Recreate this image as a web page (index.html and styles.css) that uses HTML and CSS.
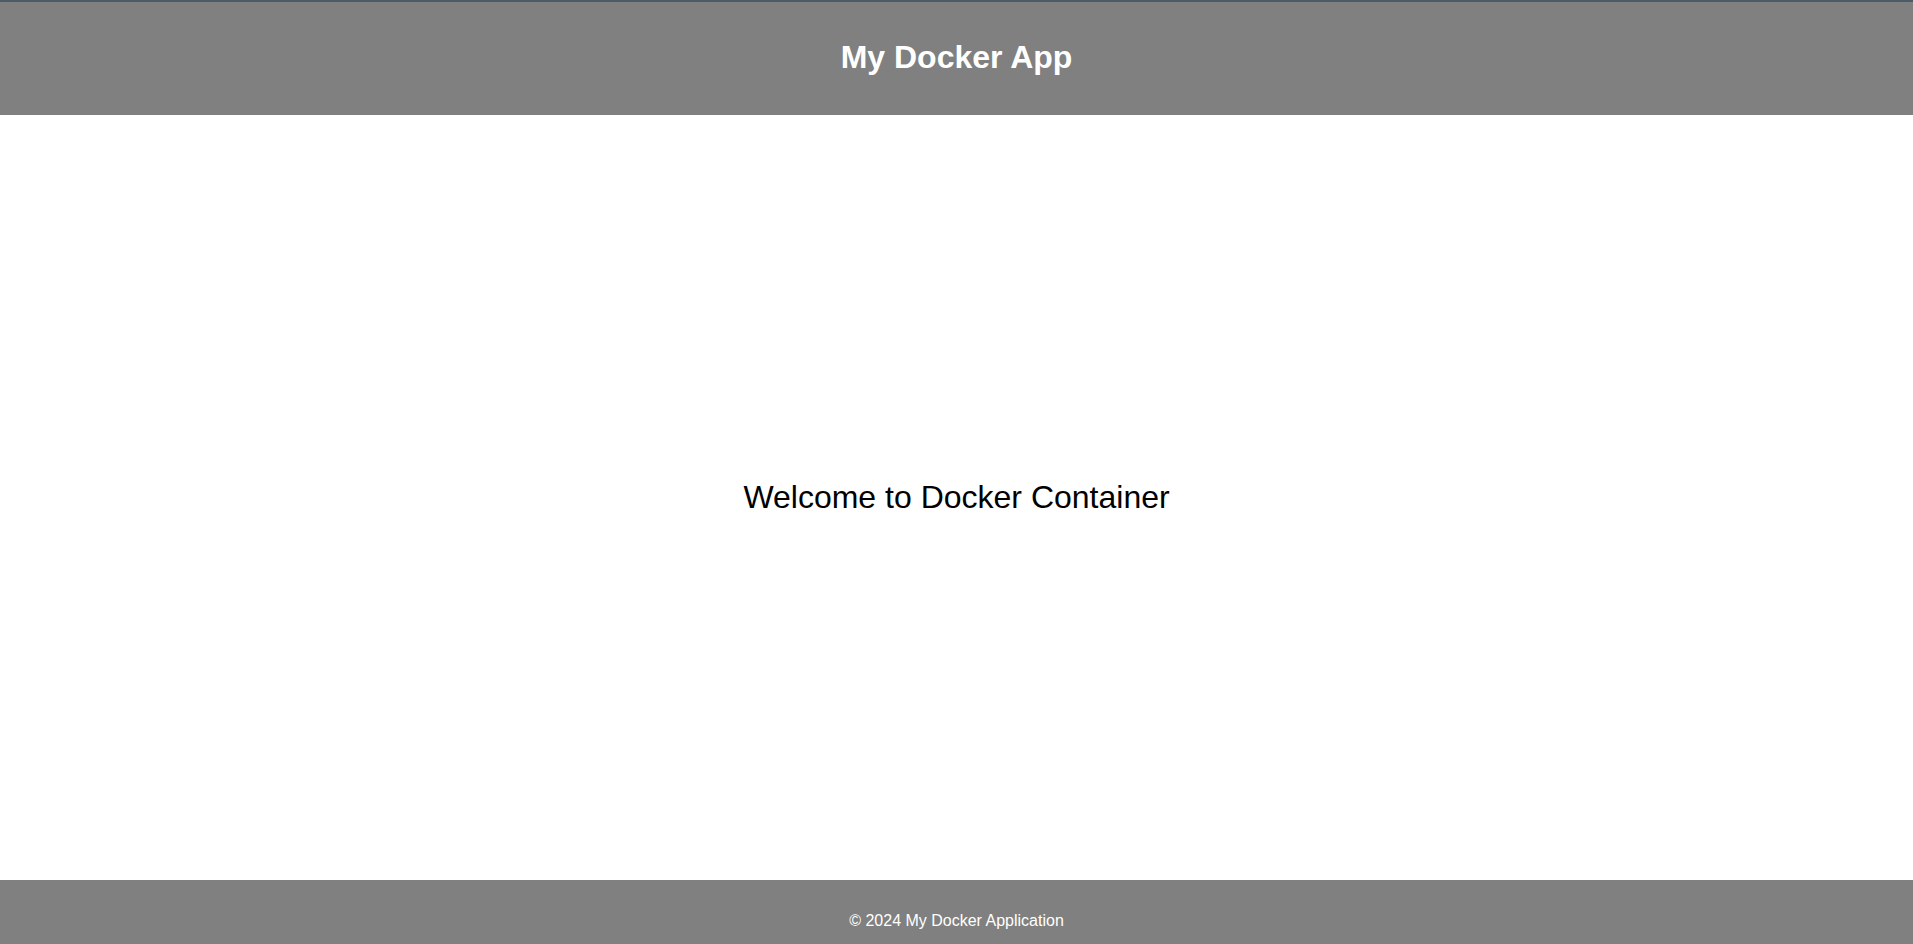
FILE: index.html
```html
<!DOCTYPE html>
<html lang="en">
<head>
<meta charset="UTF-8">
<title>My Docker App</title>
<link rel="stylesheet" href="styles.css">
</head>
<body>
<header class="site-header">
  <h1 class="site-title">My Docker App</h1>
</header>
<main class="site-main">
  <h2 class="welcome">Welcome to Docker Container</h2>
</main>
<footer class="site-footer">
  <p class="footer-text">&copy; 2024 My Docker Application</p>
</footer>
</body>
</html>
```
FILE: styles.css
```css
html, body {
  margin: 0;
  padding: 0;
}
html {
  overflow-y: scroll;
}
::-webkit-scrollbar {
  width: 9px;
  background: #f0f0f0;
}
::-webkit-scrollbar-thumb {
  background: #c2c2c2;
}
body {
  font-family: "Liberation Sans", Arial, sans-serif;
  color: #000;
  background: #fff;
}
.site-header {
  background: #808080;
  color: #fff;
  border-top: 2px solid #4b5b67;
  padding: 16px 16px 17px;
  text-align: center;
}
.site-title {
  margin: 21.44px 0;
  font-size: 32px;
  font-weight: bold;
}
.site-main {
  height: 765px;
  display: flex;
  align-items: center;
  justify-content: center;
}
.welcome {
  margin: 0;
  font-size: 32px;
  font-weight: normal;
}
.site-footer {
  background: #808080;
  color: #fff;
  padding: 16px;
  text-align: center;
}
.footer-text {
  margin: 16px 0;
  font-size: 16px;
}
```
